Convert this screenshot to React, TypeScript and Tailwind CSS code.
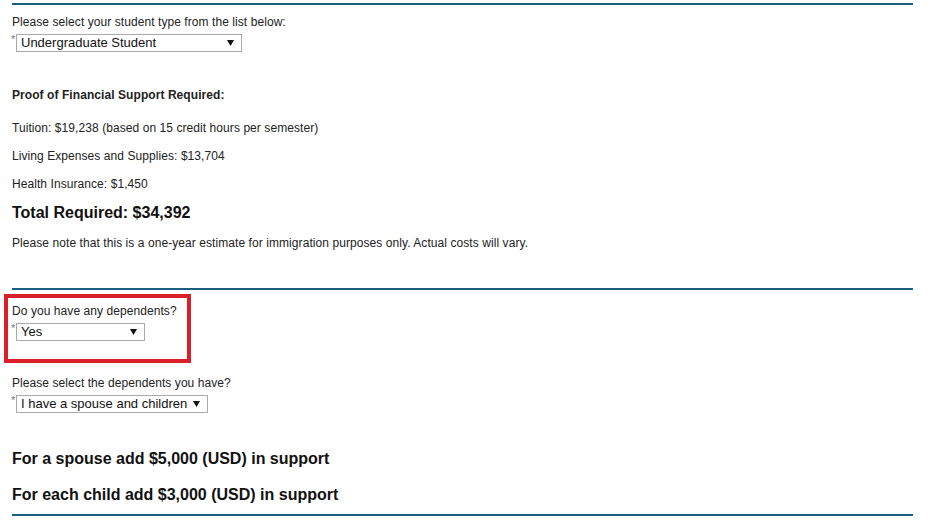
import { ReactNode } from 'react';

const font = { fontFamily: '"Liberation Sans", Arial, sans-serif' };

function Rule({ className = '' }: { className?: string }) {
  return <div className={`h-[2px] w-[901px] bg-[#1c5e7e] ${className}`} />;
}

function FakeSelect({ value, width }: { value: string; width: string }) {
  return (
    <div className="flex items-start">
      <span className="text-[11px] leading-[10px] text-[#777] w-[4px] -ml-[1px] mr-[1px]">*</span>
      <div className={`${width} h-[18px] border border-[#a9a9a9] bg-white flex items-center justify-between pl-[4px] pr-[7px]`}>
        <span className="text-[13px] leading-[16px] text-[#111]">{value}</span>
        <svg width="7" height="6" viewBox="0 0 7 6" className="shrink-0">
          <path d="M0 0 H7 L3.5 6 Z" fill="#111" />
        </svg>
      </div>
    </div>
  );
}

function Text({ children, className = '' }: { children: ReactNode; className?: string }) {
  return <p className={`text-[12px] leading-[14px] tracking-[0.07px] text-[#222] ${className}`}>{children}</p>;
}

export default function App() {
  return (
    <div className="w-[932px] h-[527px] bg-white overflow-hidden" style={font}>
      <div className="pl-[12px] flex flex-col">
        <Rule className="mt-[3px]" />
        <Text className="mt-[10px]">Please select your student type from the list below:</Text>
        <div className="mt-[5px]">
          <FakeSelect value="Undergraduate Student" width="w-[226px]" />
        </div>

        <Text className="mt-[36px] font-bold text-[#111]">Proof of Financial Support Required:</Text>
        <Text className="mt-[19px]">Tuition: $19,238 (based on 15 credit hours per semester)</Text>
        <Text className="mt-[14px]">Living Expenses and Supplies: $13,704</Text>
        <Text className="mt-[14px]">Health Insurance: $1,450</Text>
        <p className="mt-[13px] text-[16px] leading-[18px] font-bold text-[#111]">Total Required: $34,392</p>
        <Text className="mt-[14px]">Please note that this is a one-year estimate for immigration purposes only. Actual costs will vary.</Text>

        <Rule className="mt-[38px]" />

        <div className="-ml-[8px] mt-[4px] w-[187px] h-[69px] border-[4px] border-[#d9202a] pl-[4px] pt-[6px]">
          <Text>Do you have any dependents?</Text>
          <div className="mt-[5px]">
            <FakeSelect value="Yes" width="w-[129px]" />
          </div>
        </div>

        <Text className="mt-[13px]">Please select the dependents you have?</Text>
        <div className="mt-[5px]">
          <FakeSelect value="I have a spouse and children" width="w-[192px]" />
        </div>

        <p className="mt-[37px] text-[16px] leading-[18px] font-bold text-[#111]">For a spouse add $5,000 (USD) in support</p>
        <p className="mt-[18px] text-[16px] leading-[18px] font-bold text-[#111]">For each child add $3,000 (USD) in support</p>
        <Rule className="mt-[10px]" />
      </div>
    </div>
  );
}
